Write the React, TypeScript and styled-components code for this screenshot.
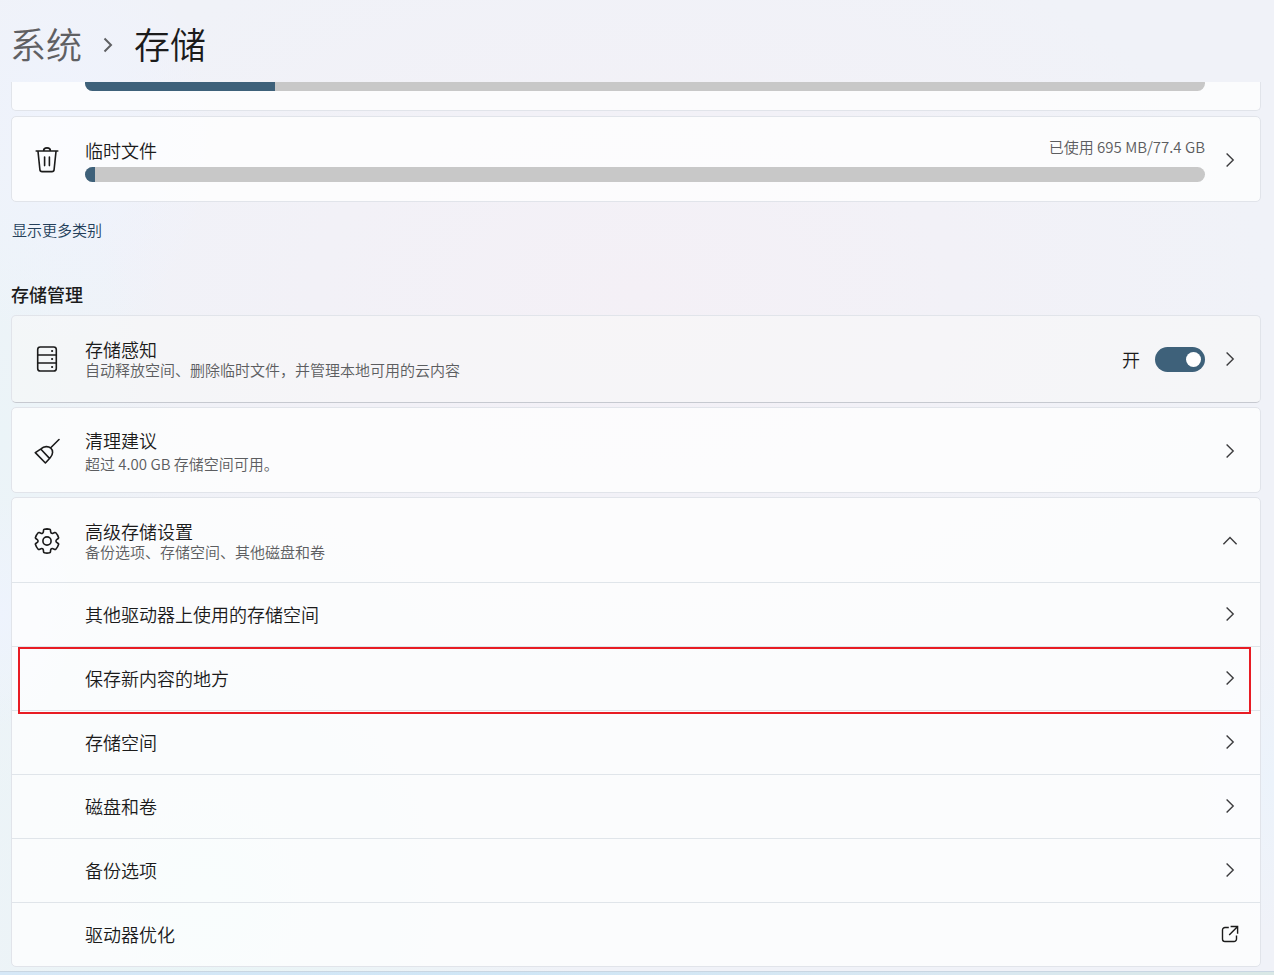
import React from "react";
import styled, { createGlobalStyle, css } from "styled-components";

const GlobalStyle = createGlobalStyle`
  * { box-sizing: border-box; }
  html, body { margin: 0; padding: 0; }
  html { background: #f0f2f8; }
  body {
    font-family: "Noto Sans CJK SC", "Noto Sans", sans-serif;
    font-weight: 350;
    color: #1b1b1b;
  }
  button, input { font: inherit; color: inherit; margin: 0; }
`;

const Page = styled.div`
  background:
    radial-gradient(ellipse 12% 22% at 5% 14%, #eff3fd 0%, rgba(239, 243, 253, 0) 100%),
    radial-gradient(ellipse 6% 12% at 0% 63%, #eef3fd 0%, rgba(238, 243, 253, 0) 100%),
    radial-gradient(ellipse 6% 16% at 100% 80%, #ecf3fb 0%, rgba(236, 243, 251, 0) 100%),
    radial-gradient(ellipse 30% 40% at 16% 92%, #e8f5f6 0%, rgba(232, 245, 246, 0) 100%),
    radial-gradient(ellipse 14% 50% at 0% 45%, #ebf4f8 0%, rgba(235, 244, 248, 0) 100%),
    radial-gradient(ellipse 50% 40% at 50% 30%, #f4f0f6 0%, rgba(244, 240, 246, 0) 100%),
    #f0f2f8;
`;

const Header = styled.header`
  display: flex;
  align-items: center;
  height: 82px;
  padding: 4px 10px 0;
`;

const Crumb = styled.a`
  font-size: 36px;
  line-height: 48px;
  color: #5f6063;
  text-decoration: none;
`;

const Title = styled.h1`
  margin: 0;
  font-size: 36px;
  line-height: 48px;
  font-weight: 350;
`;

const CrumbArrow = styled.svg`
  width: 16px;
  height: 16px;
  margin: 4px 18px 0;
  color: #5f6063;
`;

const Main = styled.main`
  padding: 0 13px 4px 11px;
`;

const Stack = styled.div<{ $gap: number }>`
  display: flex;
  flex-direction: column;
  gap: ${(p) => p.$gap}px;
`;

const Card = styled.section<{ $clipped?: boolean; $active?: boolean }>`
  border: 1px solid #e1e4ea;
  border-radius: 5px;
  background: rgba(255, 255, 255, 0.74);
  ${(p) =>
    p.$clipped &&
    css`
      border-top: 0;
      border-top-left-radius: 0;
      border-top-right-radius: 0;
      overflow: hidden;
    `}
  ${(p) =>
    p.$active &&
    css`
      background: rgba(248, 248, 248, 0.6);
      border-bottom-color: #c6c9d0;
    `}
`;

const rowLayout = css`
  display: grid;
  grid-template-columns: 26px minmax(0, 1fr) auto 16px;
  align-items: center;
  width: 100%;
  padding: 0 22px;
  border: 0;
  background: none;
  text-align: left;
`;

const CardRow = styled.div<{ $height: number }>`
  ${rowLayout}
  height: ${(p) => p.$height}px;
`;

const CardButton = styled.button<{ $height: number }>`
  ${rowLayout}
  height: ${(p) => p.$height}px;
  padding-top: 2px;
`;

const Body = styled.span<{ $gap?: number }>`
  display: flex;
  flex-direction: column;
  gap: ${(p) => p.$gap ?? 0}px;
  margin-left: 25px;
`;

const UsageBody = styled.span`
  display: flex;
  flex-direction: column;
  grid-column: 2 / 4;
  margin: 0 17px 0 25px;
`;

const UsageHead = styled.span`
  display: flex;
  justify-content: space-between;
  align-items: flex-start;
  padding-bottom: 6px;
`;

const Label = styled.span`
  font-size: 18px;
  line-height: 22px;
`;

const Note = styled.span`
  font-size: 15px;
  line-height: 20px;
  color: #5c5d60;
`;

const UsageNote = styled(Note)`
  line-height: 16px;
`;

const Track = styled.span`
  display: block;
  flex: 1 0 auto;
  height: 15px;
  border-radius: 8px;
  background: #c8c8c8;
  overflow: hidden;
`;

const Fill = styled.span`
  display: block;
  height: 100%;
  background: #3e617a;
`;

const ClippedUsage = styled.div`
  display: flex;
  align-items: flex-start;
  height: 28px;
  padding: 0 55px 0 73px;

  ${Track} {
    margin-top: -6px;
  }
`;

const MoreLink = styled.a`
  display: block;
  width: fit-content;
  margin: 18px 0 0 1px;
  font-size: 15px;
  line-height: 20px;
  color: #243f5a;
  text-decoration: none;
`;

const SectionTitle = styled.h2`
  margin: 42px 0 9px;
  font-size: 18px;
  line-height: 24px;
  font-weight: 500;
`;

const SwitchLabel = styled.label`
  display: flex;
  align-items: center;
  gap: 15px;
  margin-right: 17px;
  font-size: 18px;
  line-height: 22px;
`;

const Switch = styled.input`
  appearance: none;
  display: flex;
  align-items: center;
  justify-content: flex-end;
  width: 50px;
  height: 25px;
  padding: 0 4px;
  border-radius: 13px;
  background: #8a8a8a;

  &:checked {
    background: #3e617a;
  }

  &::before {
    content: "";
    width: 15px;
    height: 15px;
    border-radius: 50%;
    background: #fff;
  }

  &:not(:checked) {
    justify-content: flex-start;
  }
`;

const IconButton = styled.button`
  display: flex;
  padding: 0;
  border: 0;
  background: none;
`;

const List = styled.ul`
  margin: 0;
  padding: 0;
  list-style: none;
`;

const ListItem = styled.li<{ $marked?: boolean }>`
  position: relative;
  border-top: 1px solid #e0e5ea;
  ${(p) =>
    p.$marked &&
    css`
      z-index: 1;

      &::after {
        content: "";
        position: absolute;
        inset: 0 9px -4px 6px;
        border: 2px solid #e81c24;
        pointer-events: none;
      }
    `}
`;

const ListButton = styled.button`
  display: flex;
  align-items: center;
  justify-content: space-between;
  width: 100%;
  height: 63px;
  padding: 0 22px 1px 73px;
  border: 0;
  background: none;
  text-align: left;
`;

const Taskbar = styled.footer`
  height: 4px;
  border-top: 1px solid #c9d6e2;
  background: linear-gradient(90deg, #d6e8f7 0%, #cfe6f6 40%, #d9e8f2 75%, #d9e8e6 100%);
`;

const LineIcon = styled.svg`
  display: block;
  width: 26px;
  height: 26px;
  fill: none;
  stroke: #1b1b1b;
  stroke-linecap: round;
  stroke-linejoin: round;
`;

const SmallIcon = styled.svg`
  display: block;
  width: 16px;
  height: 16px;
  fill: none;
  stroke: #3c3c3e;
  stroke-width: 1.4;
  overflow: visible;
`;

const ChevronRight = () => (
  <SmallIcon viewBox="0 0 16 16" aria-hidden="true">
    <path d="M4.6 1.4 11.2 8l-6.6 6.6" />
  </SmallIcon>
);

const ChevronUp = () => (
  <SmallIcon viewBox="0 0 16 16" aria-hidden="true">
    <path d="M1.4 11.2 8 4.6l6.6 6.6" />
  </SmallIcon>
);

const OpenExternal = () => (
  <SmallIcon viewBox="0 0 16 16" aria-hidden="true">
    <path
      stroke="#1b1b1b"
      d="M6.8 1.5H3A2.5 2.5 0 0 0 .5 4v9A2.5 2.5 0 0 0 3 15.5h9a2.5 2.5 0 0 0 2.5-2.5V9.6M8.6.5h7v7.2M15.4.7 7.2 8.9"
    />
  </SmallIcon>
);

const TrashIcon = () => (
  <LineIcon viewBox="0 0 26 26" strokeWidth="1.6" aria-hidden="true">
    <path d="M2.2 4h21.6M9.6 3.8a3.4 2.9 0 0 1 6.8 0M4 4.4l1.9 18.2a2.2 2.2 0 0 0 2.2 2h9.8a2.2 2.2 0 0 0 2.2-2L22 4.4M10.6 10v8.6M15.4 10v8.6" />
  </LineIcon>
);

const StorageIcon = () => (
  <LineIcon viewBox="0 0 26 26" strokeWidth="1.6" aria-hidden="true">
    <rect x="3.7" y="1" width="18.6" height="24" rx="2.6" />
    <path d="M3.7 9h18.6M3.7 17h18.6" />
    <path d="M18 5.1h.2M18 13h.2M18 20.9h.2" strokeWidth="2" />
  </LineIcon>
);

const BroomIcon = () => (
  <LineIcon viewBox="0 0 26 26" strokeWidth="1.6" aria-hidden="true">
    <path d="M25 1.5 16.7 9.8M1.3 14.6 7 10.8C10 8 14.4 8 16.8 10.2s2.5 6.2-.6 9.6L11.4 25ZM6.7 11l8.8 9.4" />
  </LineIcon>
);

const GearIcon = () => (
  <LineIcon viewBox="1.5 1.5 21 21" strokeWidth="1.3" aria-hidden="true">
    <path d="M12.01 2.25c.74.01 1.47.09 2.18.25.32.07.55.33.59.65l.17 1.53c.07.7.66 1.23 1.37 1.23.19 0 .38-.04.55-.12l1.4-.61c.3-.13.64-.06.85.17 1.02 1.08 1.77 2.38 2.21 3.8.09.3-.02.63-.27.82l-1.25.92c-.35.26-.56.67-.56 1.11s.21.85.57 1.11l1.24.92c.26.19.37.52.27.83a9.8 9.8 0 0 1-2.2 3.79c-.22.23-.56.3-.85.17l-1.41-.62a1.38 1.38 0 0 0-1.92 1.12l-.17 1.52c-.04.32-.27.58-.58.65-1.44.34-2.95.34-4.4 0a.75.75 0 0 1-.57-.65l-.17-1.52a1.38 1.38 0 0 0-1.93-1.11l-1.4.62a.75.75 0 0 1-.85-.18 9.8 9.8 0 0 1-2.21-3.8.75.75 0 0 1 .27-.82l1.25-.92a1.38 1.38 0 0 0 0-2.22l-1.24-.92a.75.75 0 0 1-.28-.82 9.8 9.8 0 0 1 2.21-3.8.75.75 0 0 1 .85-.17l1.4.62a1.38 1.38 0 0 0 1.93-1.12l.17-1.53a.75.75 0 0 1 .58-.65c.72-.16 1.45-.24 2.2-.25Z" />
    <circle cx="12" cy="12" r="3.3" />
  </LineIcon>
);

const Usage = ({ name, percent }: { name: string; percent: number }) => (
  <Track role="progressbar" aria-label={name} aria-valuenow={percent} aria-valuemin={0} aria-valuemax={100}>
    <Fill style={{ width: `${percent}%` }} />
  </Track>
);

const advancedItems = [
  { name: "其他驱动器上使用的存储空间" },
  { name: "保存新内容的地方", marked: true },
  { name: "存储空间" },
  { name: "磁盘和卷" },
  { name: "备份选项" },
  { name: "驱动器优化", external: true },
];

export default function App() {
  return (
    <Page lang="zh-CN">
      <GlobalStyle />
      <Header>
        <Crumb href="#system">系统</Crumb>
        <CrumbArrow viewBox="0 0 16 16" fill="none" stroke="currentColor" strokeWidth="2" aria-hidden="true">
          <path d="M4.5 1.5 11 8l-6.5 6.5" />
        </CrumbArrow>
        <Title>存储</Title>
      </Header>
      <Main>
        <Stack $gap={5}>
          <Card $clipped>
            <ClippedUsage>
              <Usage name="已使用" percent={17} />
            </ClippedUsage>
          </Card>
          <Card>
            <CardButton type="button" $height={84}>
              <TrashIcon />
              <UsageBody>
                <UsageHead>
                  <Label>临时文件</Label>
                  <UsageNote>已使用 695 MB/77.4 GB</UsageNote>
                </UsageHead>
                <Usage name="临时文件" percent={0.9} />
              </UsageBody>
              <ChevronRight />
            </CardButton>
          </Card>
        </Stack>
        <MoreLink href="#more">显示更多类别</MoreLink>
        <SectionTitle>存储管理</SectionTitle>
        <Stack $gap={4}>
          <Card $active>
            <CardRow $height={86}>
              <StorageIcon />
              <Body>
                <Label>存储感知</Label>
                <Note>自动释放空间、删除临时文件，并管理本地可用的云内容</Note>
              </Body>
              <SwitchLabel>
                开
                <Switch type="checkbox" role="switch" defaultChecked />
              </SwitchLabel>
              <IconButton type="button" aria-label="存储感知">
                <ChevronRight />
              </IconButton>
            </CardRow>
          </Card>
          <Card>
            <CardButton type="button" $height={84}>
              <BroomIcon />
              <Body $gap={3}>
                <Label>清理建议</Label>
                <Note>超过 4.00 GB 存储空间可用。</Note>
              </Body>
              <span />
              <ChevronRight />
            </CardButton>
          </Card>
          <Card>
            <CardButton type="button" $height={84} aria-expanded="true">
              <GearIcon />
              <Body>
                <Label>高级存储设置</Label>
                <Note>备份选项、存储空间、其他磁盘和卷</Note>
              </Body>
              <span />
              <ChevronUp />
            </CardButton>
            <List>
              {advancedItems.map((item) => (
                <ListItem key={item.name} $marked={item.marked}>
                  <ListButton type="button">
                    <Label>{item.name}</Label>
                    {item.external ? <OpenExternal /> : <ChevronRight />}
                  </ListButton>
                </ListItem>
              ))}
            </List>
          </Card>
        </Stack>
      </Main>
      <Taskbar />
    </Page>
  );
}
